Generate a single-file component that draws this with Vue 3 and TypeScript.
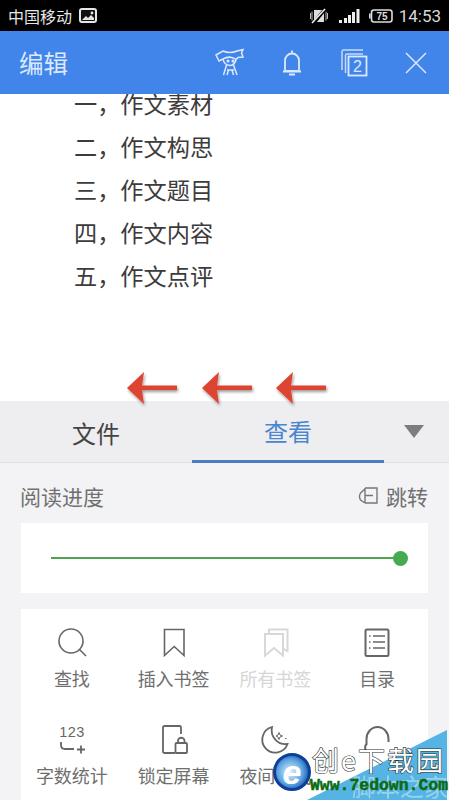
<template>
  <div class="page">
    <header class="status">
      <span class="carrier">中国移动</span>
      <svg class="pic" width="18" height="15" viewBox="0 0 18 15">
        <rect x="1" y="1" width="16" height="13" rx="2" fill="#111" stroke="#e6e6e6" stroke-width="2" />
        <path d="M3 12L7 8l2 2 3-3 3 3v2z" fill="#e6e6e6" />
        <circle cx="13" cy="5" r="1.4" fill="#e6e6e6" />
      </svg>
      <span class="grow"></span>
      <svg width="20" height="16" viewBox="0 0 20 16">
        <rect x="5" y="2" width="10" height="12" fill="#ddd" />
        <path d="M1.5 5v6M18.5 5v6M3 3.5v9M17 3.5v9" stroke="#bbb" stroke-width="1" />
        <path d="M4 16L17 0" stroke="#000" stroke-width="3.5" />
        <path d="M3 15L16 1" stroke="#eee" stroke-width="1.6" />
      </svg>
      <svg class="signal" width="21" height="14" viewBox="0 0 21 14">
        <rect x="0" y="11" width="3" height="3" fill="#eee" />
        <rect x="5" y="9" width="3" height="5" fill="#eee" />
        <rect x="9" y="6" width="3" height="8" fill="#eee" />
        <rect x="13" y="3" width="3" height="11" fill="#eee" />
        <rect x="17.5" y="0" width="3" height="14" fill="#eee" />
      </svg>
      <svg class="battery" width="24" height="14" viewBox="0 0 24 14">
        <path d="M0.8 4.5v5" stroke="#ddd" stroke-width="1.6" />
        <rect x="2.5" y="1" width="20.5" height="12" rx="2.5" fill="none" stroke="#ddd" stroke-width="1.6" />
        <text x="13" y="11" class="batt-num">75</text>
      </svg>
      <span class="time">14:53</span>
    </header>

    <div class="appbar">
      <span class="title">编辑</span>
      <span class="grow"></span>
      <svg class="bar-icon" width="32" height="32" viewBox="0 0 32 32">
        <path d="M2 8L9 4Q16 7 23 4L29 2.500 27.500 6 29 10 24 10.500 22 12.500Q16 8 9 12L5 14 3.500 11z" />
        <path d="M9 12Q10 18 16 18.500 21 18 22 12.500" />
        <path d="M12.500 18L9.500 28M19.500 18L23 28M13 23h7M14.500 23L13 28M18 23L19.500 28" />
        <circle cx="14" cy="14" r="0.800" />
        <circle cx="19" cy="14" r="0.800" />
      </svg>
      <svg class="bar-icon" width="32" height="32" viewBox="0 0 32 32">
        <path d="M9 24V13.500a7 7 0 0 1 14 0V24zM7 24.500h18M16 3.500v3M13 27.500h6" stroke-width="1.800" />
      </svg>
      <svg class="bar-icon" width="32" height="32" viewBox="0 0 32 32">
        <path d="M4 23V4.500A1.500 1.500 0 0 1 5.500 3H25M7.500 26V8.500A1.500 1.500 0 0 1 9 7H25" opacity=".85" />
        <rect x="10.500" y="9.500" width="18" height="19" stroke-width="1.800" />
        <text x="19.500" y="25" class="tab-num">2</text>
      </svg>
      <svg class="bar-icon" width="32" height="32" viewBox="0 0 32 32">
        <path d="M6 6L26 26M26 6L6 26" />
      </svg>
    </div>

    <main class="doc">
      <p v-for="line in lines" :key="line" class="doc-line">{{ line }}</p>
    </main>

    <section class="panel">
      <nav class="tabs">
        <div class="tab">文件</div>
        <div class="tab active">查看</div>
        <div class="tab-more"><i class="caret"></i></div>
      </nav>

      <div class="progress-head">
        <span>阅读进度</span>
        <span class="jump">
          <svg width="21" height="20" viewBox="0 0 21 20">
            <path d="M7 2H19V17H7M7 2V17M7 9.500H15M7 3 2.500 7Q0.500 10.500 2.500 14L7 17" fill="none" stroke="#777" stroke-width="1.400" />
          </svg>
          跳转
        </span>
      </div>

      <div class="slider-card">
        <div class="track"><i class="knob"></i></div>
      </div>

      <div class="tools">
        <div v-for="t in tools" :key="t.icon" class="tool" :class="{ off: t.off }">
          <svg class="tool-icon" width="32" height="32" viewBox="0 0 32 32">
            <template v-if="t.icon === 'search'">
              <circle cx="15" cy="15" r="12" />
              <path d="M23.500 23.500L30 30" />
            </template>
            <path v-else-if="t.icon === 'mark'" d="M6.500 3.500H26V29.500L16.200 20.500 6.500 29.500Z" />
            <path v-else-if="t.icon === 'marks'" d="M6 8H24V29.500L15 22 6 29.500ZM10 8V3.500H28.500V25L24 22.500" />
            <template v-else-if="t.icon === 'toc'">
              <rect x="4.500" y="3.500" width="23" height="26.500" rx="1.500" stroke-width="2" />
              <path d="M12 10H24M12 16H24M12 22H24M8 10H9.500M8 16H9.500M8 22H9.500" stroke-width="1.400" />
            </template>
            <template v-else-if="t.icon === 'count'">
              <text x="16" y="14" class="count-num">123</text>
              <path d="M5 19V22Q5 26 9 26H18M21 26.500H29M25 22.500V30.500" stroke-width="1.800" />
            </template>
            <template v-else-if="t.icon === 'lock'">
              <path d="M17 30H6.500A1.500 1.500 0 0 1 5 28.500V4.500A1.500 1.500 0 0 1 6.500 3H21.500A1.500 1.500 0 0 1 23 4.500V11" stroke-width="1.800" />
              <rect x="17.500" y="20" width="11.500" height="10" rx="1" stroke-width="1.800" />
              <path d="M20 20V18A3.200 3.200 0 0 1 26.500 18V20" stroke-width="1.800" />
            </template>
            <template v-else-if="t.icon === 'moon'">
              <path d="M13 4A13 13 0 1 0 28.500 21 14 14 0 0 1 13 4Z" stroke-width="1.800" />
              <path d="M20 9.500L21 12 23.500 13 21 14 20 16.500 19 14 17 13 19 12ZM26 15.500h1.500" stroke-width="1" />
            </template>
            <path v-else d="M5.500 22V16A11 12 0 0 1 27.500 16V19M5.500 21Q3 24 5 28" stroke-width="2" />
          </svg>
          <span v-if="t.label" class="tool-label">{{ t.label }}</span>
        </div>
      </div>
    </section>

    <!-- screenshot annotation -->
    <svg class="arrows" width="220" height="44" viewBox="0 0 220 44">
      <defs>
        <filter id="arrow-shadow" x="-20%" y="-20%" width="140%" height="150%">
          <feDropShadow dx="1" dy="2" stdDeviation="1.500" flood-color="#000" flood-opacity=".4" />
        </filter>
      </defs>
      <g v-for="x in [7, 82, 156]" :key="x" :transform="`translate(${x} 0)`" filter="url(#arrow-shadow)">
        <path d="M0 22L17 6 15 19.500H50V24H15L17 38Z" fill="#dd4530" />
      </g>
    </svg>

    <!-- site watermark in the corner -->
    <svg class="mark" width="189" height="85" viewBox="260 715 189 85">
      <defs>
        <radialGradient id="e-ball" cx="45%" cy="50%" r="60%">
          <stop offset="0" stop-color="#e6f3fb" />
          <stop offset=".6" stop-color="#5aa4e2" />
          <stop offset="1" stop-color="#0c3f9c" />
        </radialGradient>
      </defs>
      <polygon points="307,800 447,730 447,800" fill="#55b4e3" />
      <text x="352" y="796" class="wm-cn">脚本之家</text>
      <circle cx="292" cy="772" r="17.500" fill="url(#e-ball)" stroke="#0d3f98" stroke-width="3" />
      <text x="292" y="784" class="wm-e">e</text>
      <text x="312" y="771" class="wm-brand">创e下载园</text>
      <text x="310" y="790" class="wm-url" textLength="138" lengthAdjust="spacingAndGlyphs">Www.7edown.Com</text>
    </svg>
  </div>
</template>

<script setup lang="ts">
const lines = ['一，作文素材', '二，作文构思', '三，作文题目', '四，作文内容', '五，作文点评'];

const tools = [
  { label: '查找', icon: 'search' },
  { label: '插入书签', icon: 'mark' },
  { label: '所有书签', icon: 'marks', off: true },
  { label: '目录', icon: 'toc' },
  { label: '字数统计', icon: 'count' },
  { label: '锁定屏幕', icon: 'lock' },
  { label: '夜间模式', icon: 'moon' },
  { label: '', icon: 'read' },
];
</script>

<style>
html,
body {
  margin: 0;
  background: #fff;
}
</style>

<style scoped>
.page {
  position: relative;
  width: 449px;
  height: 800px;
  overflow: hidden;
  display: flex;
  flex-direction: column;
  font-family: 'Noto Sans CJK SC', 'Noto Sans', sans-serif;
}

.grow {
  flex: 1;
}

.status {
  flex: none;
  height: 31px;
  box-sizing: border-box;
  padding: 0 8px;
  background: #000;
  color: #e6e6e6;
  display: flex;
  align-items: center;
  font-size: 16px;
}

.pic {
  margin-left: 7px;
}

.signal {
  margin-left: 10px;
}

.battery {
  margin-left: 9px;
}

.batt-num {
  font: bold 10px 'Liberation Sans', sans-serif;
  fill: #ddd;
  text-anchor: middle;
}

.time {
  margin-left: 6px;
  font: 17px Roboto, sans-serif;
  color: #d8d8d8;
}

.appbar {
  flex: none;
  height: 63px;
  box-sizing: border-box;
  padding: 0 17px 0 19px;
  background: #4285ea;
  color: #dce9fd;
  display: flex;
  align-items: center;
  gap: 30px;
}

.title {
  font-size: 24.5px;
}

.bar-icon {
  fill: none;
  stroke: #dce9fd;
  stroke-width: 1.500;
}

.tab-num {
  font: 16px 'Liberation Sans', sans-serif;
  fill: #dce9fd;
  stroke: none;
  text-anchor: middle;
}

.doc {
  flex: none;
  height: 307px;
  overflow: hidden;
  background: #fff;
  padding-left: 74px;
  color: #3c3c3c;
}

.doc-line {
  margin: 0;
  font-size: 23.200px;
  line-height: 43px;
}

.doc-line:first-child {
  margin-top: -12px;
}

.panel {
  flex: 1;
  min-height: 0;
  background: #f3f3f5;
}

.tabs {
  height: 62px;
  box-sizing: border-box;
  display: grid;
  grid-template-columns: 192px 192px 1fr;
  background: #eeeef0;
  border-bottom: 1px solid #dfdfe1;
}

.tab {
  display: flex;
  align-items: center;
  justify-content: center;
  font-size: 24px;
  color: #444;
  margin-bottom: -1px;
}

.tab.active {
  color: #4a86cf;
  border-bottom: 3px solid #4a7cc8;
}

.tab-more {
  display: flex;
  align-items: center;
  justify-content: center;
  padding-right: 6px;
}

.caret {
  width: 0;
  height: 0;
  border-left: 10.500px solid transparent;
  border-right: 10.500px solid transparent;
  border-top: 13px solid #7d7d7f;
}

.progress-head {
  height: 60px;
  box-sizing: border-box;
  padding: 6px 21px 0 20px;
  display: flex;
  align-items: center;
  justify-content: space-between;
  font-size: 21px;
  color: #707070;
}

.jump {
  display: flex;
  align-items: center;
  gap: 7px;
}

.slider-card {
  margin: 0 21px;
  height: 70px;
  box-sizing: border-box;
  padding: 0 28px 0 30px;
  background: #fff;
  display: flex;
  align-items: center;
}

.track {
  position: relative;
  flex: 1;
  height: 2px;
  background: #4ba64f;
}

.knob {
  position: absolute;
  right: -7.500px;
  top: -6.500px;
  width: 15px;
  height: 15px;
  border-radius: 50%;
  background: #45ab50;
}

.tools {
  margin: 16px 21px 0;
  background: #fff;
  display: grid;
  grid-template-columns: repeat(4, 1fr);
  grid-auto-rows: 97px;
}

.tool {
  display: flex;
  flex-direction: column;
  align-items: center;
  padding-top: 17px;
  color: #6f6f6f;
}

.tool-icon {
  flex: none;
  fill: none;
  stroke: #666;
  stroke-width: 1.600;
}

.tool-label {
  margin-top: 8px;
  font-size: 18px;
  line-height: 24px;
  white-space: nowrap;
}

.tool.off {
  color: #d6d6d6;
}

.tool.off .tool-icon {
  stroke: #d8d8d8;
  stroke-width: 2;
}

.count-num {
  font: 14.500px 'Liberation Sans', sans-serif;
  fill: #666;
  stroke: none;
  text-anchor: middle;
  letter-spacing: 0.500px;
}

.arrows {
  position: absolute;
  left: 120px;
  top: 366px;
}

.mark {
  position: absolute;
  right: 0;
  bottom: 0;
}

.wm-cn {
  font-size: 24px;
  fill: #fff;
  opacity: 0.4;
}

.wm-e {
  font: italic bold 34px 'Liberation Sans', sans-serif;
  fill: #fff;
  text-anchor: middle;
}

.wm-brand {
  font-size: 27px;
  letter-spacing: 2px;
  fill: #fff;
  stroke: #2b3434;
  stroke-width: 1.200;
  paint-order: stroke;
}

.wm-url {
  font: bold 17px 'Liberation Mono', monospace;
  fill: #0b6b12;
  stroke: #0b6b12;
  stroke-width: 0.500;
}
</style>
